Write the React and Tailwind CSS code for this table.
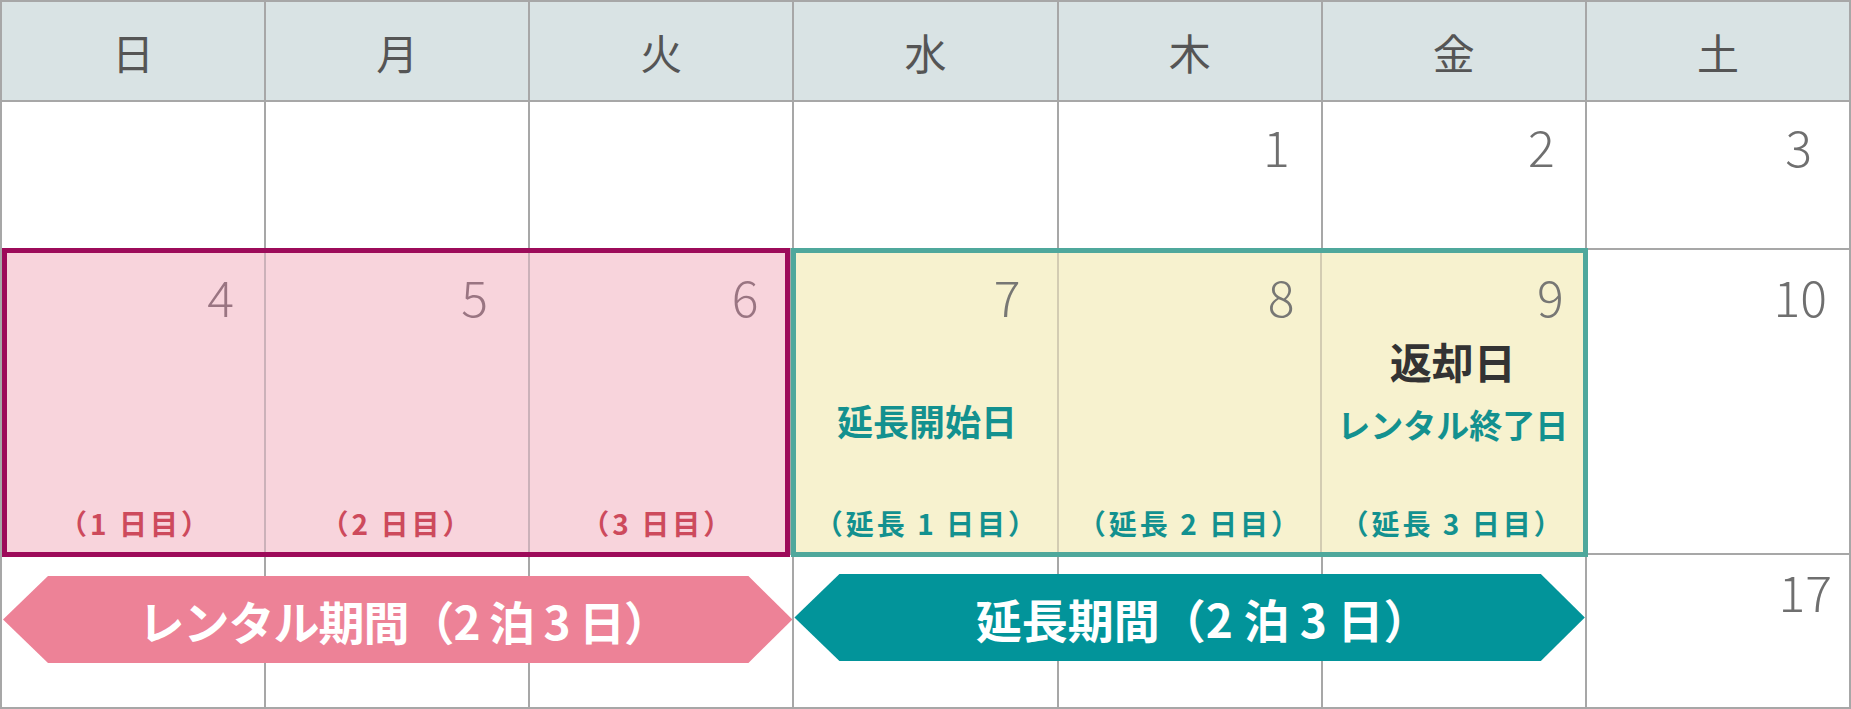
const headers = ['日', '月', '火', '水', '木', '金', '土']

function Num({ n, className }) {
    return <div className={`text-right text-[50px] leading-none font-light ${className}`}>{n}</div>
}

function PinkCell({ n, day, numPad, line }) {
    return (
        <div className={`flex flex-col pt-[17px] pb-[15px] ${line ? 'border-r-2 border-[#cbb1b9]' : ''}`}>
            <Num n={n} className={`text-[#9a7582] ${numPad}`} />
            <div className="mt-auto text-center text-[28px] leading-none font-bold tracking-[3px] text-[#cd4a5c]">
                （{day} 日目）
            </div>
        </div>
    )
}

function Arrow({ className, children }) {
    return (
        <div className={`row-start-4 col-span-3 h-[87px] flex items-center justify-center text-white text-[46px] font-bold leading-none [clip-path:polygon(45px_0,calc(100%_-_44px)_0,100%_50%,calc(100%_-_44px)_100%,45px_100%,0_50%)] ${className}`}>
            {children}
        </div>
    )
}

export default function App() {
    return (
        <div className="w-[1851px] h-[709px] bg-white [font-family:'Noto_Sans_CJK_JP','Noto_Sans',sans-serif]">
            <div className="grid grid-cols-7 grid-rows-[98px_146px_303px_152px] gap-[2px] w-[1851px] h-[709px] bg-[#a7a7a7] border-2 border-[#a7a7a7]">
                {/* header */}
                {headers.map(h => (
                    <div key={h} className="bg-[#d9e3e4] flex items-center justify-center pt-[2px] text-[42px] leading-none text-[#555]">
                        {h}
                    </div>
                ))}

                {/* week 1 */}
                <div className="bg-white" />
                <div className="bg-white" />
                <div className="bg-white" />
                <div className="bg-white" />
                <div className="bg-white pt-[18px] pr-[31px]"><Num n="1" className="text-[#6f6f6f]" /></div>
                <div className="bg-white pt-[18px] pr-[30px]"><Num n="2" className="text-[#6f6f6f]" /></div>
                <div className="bg-white pt-[18px] pr-[37px]"><Num n="3" className="text-[#6f6f6f]" /></div>

                {/* week 2: rental period */}
                <div className="col-span-3 -mt-[2px] -mb-[4px] mr-[2px] relative z-10 grid grid-cols-[259px_264px_1fr] border-[5px] border-[#9d0b5a] bg-[#f8d4dc]">
                    <PinkCell n="4" day="1" numPad="pr-[30px]" line />
                    <PinkCell n="5" day="2" numPad="pr-[40px]" line />
                    <PinkCell n="6" day="3" numPad="pr-[27px]" />
                </div>

                {/* week 2: extension */}
                <div className="col-span-3 -mt-[2px] -mb-[4px] -ml-[3px] -mr-[3px] relative z-10 grid grid-cols-[263px_263px_1fr] border-[5px] border-[#4fa89c] bg-[#f7f2cf] text-[#13918f]">
                    <div className="flex flex-col pt-[17px] pb-[15px] border-r-2 border-[#d3ccb2]">
                        <Num n="7" className="text-[#777774] pr-[37px]" />
                        <div className="mt-[82px] text-center text-[36px] leading-none font-bold">延長開始日</div>
                        <div className="mt-auto text-center text-[28px] leading-none font-bold tracking-[3px]">（延長 1 日目）</div>
                    </div>
                    <div className="flex flex-col pt-[17px] pb-[15px] border-r-2 border-[#d3ccb2]">
                        <Num n="8" className="text-[#777774] pr-[26px]" />
                        <div className="mt-auto text-center text-[28px] leading-none font-bold tracking-[3px]">（延長 2 日目）</div>
                    </div>
                    <div className="flex flex-col pt-[17px] pb-[15px]">
                        <Num n="9" className="text-[#777774] pr-[19px]" />
                        <div className="mt-[20px] text-center text-[42px] leading-none font-bold text-[#333]">返却日</div>
                        <div className="mt-[26px] text-center text-[33px] leading-none font-bold">レンタル終了日</div>
                        <div className="mt-auto text-center text-[28px] leading-none font-bold tracking-[3px]">（延長 3 日目）</div>
                    </div>
                </div>

                <div className="bg-white pt-[20px] pr-[22px]"><Num n="10" className="text-[#6f6f6f]" /></div>

                {/* week 3 */}
                <div className="row-start-4 col-start-1 bg-white" />
                <div className="row-start-4 col-start-2 bg-white" />
                <div className="row-start-4 col-start-3 bg-white" />
                <div className="row-start-4 col-start-4 bg-white" />
                <div className="row-start-4 col-start-5 bg-white" />
                <div className="row-start-4 col-start-6 bg-white" />
                <div className="row-start-4 col-start-7 bg-white pt-[10px] pr-[17px]"><Num n="17" className="text-[#6f6f6f]" /></div>

                <Arrow className="col-start-1 mt-[21px] ml-[1px] pl-[12px] tracking-[-1px] bg-[#ed8297]">
                    レンタル期間（2 泊 3 日）
                </Arrow>
                <Arrow className="col-start-4 mt-[19px] pl-[26px] bg-[#02949a]">
                    延長期間（2 泊 3 日）
                </Arrow>
            </div>
        </div>
    )
}
